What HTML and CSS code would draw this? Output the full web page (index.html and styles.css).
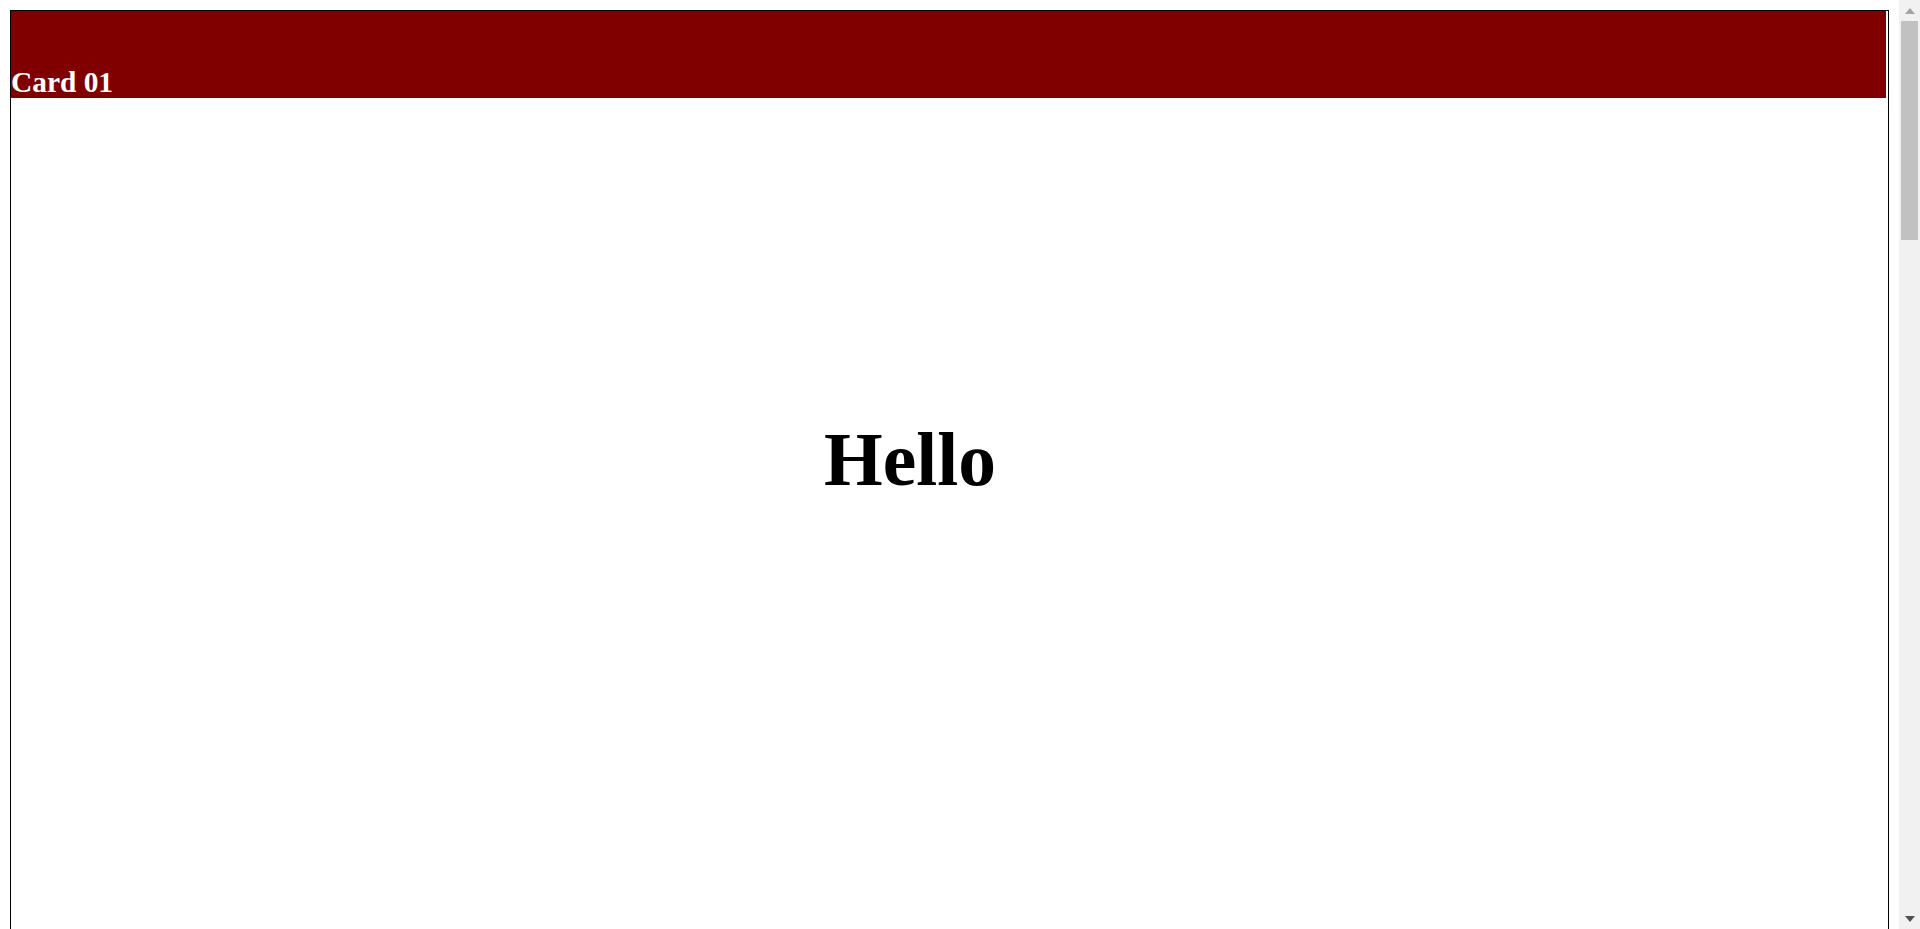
FILE: index.html
```html
<!DOCTYPE html>
<html lang="en">
<head>
<meta charset="utf-8">
<title>Card 01</title>
<link rel="stylesheet" href="styles.css">
</head>
<body>
  <div class="page">
    <section class="card">
      <header class="card-header">
        <h2 class="card-title">Card 01</h2>
      </header>
      <div class="card-body">
        <h1 class="greeting">Hello</h1>
      </div>
    </section>
  </div>
  <div class="scrollbar" aria-hidden="true">
    <div class="sb-button">
      <svg width="10" height="6" viewBox="0 0 10 6"><polygon points="5,0 10,6 0,6" fill="#a3a3a3"/></svg>
    </div>
    <div class="sb-track">
      <div class="sb-thumb"></div>
    </div>
    <div class="sb-button">
      <svg width="10" height="6" viewBox="0 0 10 6"><polygon points="0,0 10,0 5,6" fill="#505050"/></svg>
    </div>
  </div>
</body>
</html>
```

FILE: styles.css
```css
html, body {
  margin: 0;
  padding: 0;
  background: #ffffff;
}

body {
  font-family: "Liberation Serif", "Times New Roman", serif;
}

.page {
  padding: 10px;
}

.card {
  box-sizing: border-box;
  width: 1879px;
  height: 3743px;
  border: 1px solid #000000;
}

.card-header {
  width: 1875px;
  height: 87px;
  background: #800000;
  display: flex;
  align-items: flex-end;
}

.card-title {
  margin: 0;
  color: #ffffff;
  font-size: 29.4px;
  font-weight: bold;
  line-height: 1;
  padding-bottom: 1px;
}

.card-body {
  padding-top: 324px;
  padding-right: 79px;
  text-align: center;
}

.greeting {
  margin: 0;
  font-size: 75.5px;
  font-weight: bold;
  line-height: 1;
  color: #000000;
}

.scrollbar {
  position: fixed;
  top: 0;
  right: 0;
  width: 21px;
  height: 100vh;
  background: #f1f1f1;
  display: flex;
  flex-direction: column;
}

.sb-button {
  height: 21px;
  flex: 0 0 21px;
  display: flex;
  align-items: center;
  justify-content: center;
}

.sb-track {
  flex: 1 1 auto;
  padding: 0 2px;
}

.sb-thumb {
  height: 219px;
  background: #c1c1c1;
}
```
